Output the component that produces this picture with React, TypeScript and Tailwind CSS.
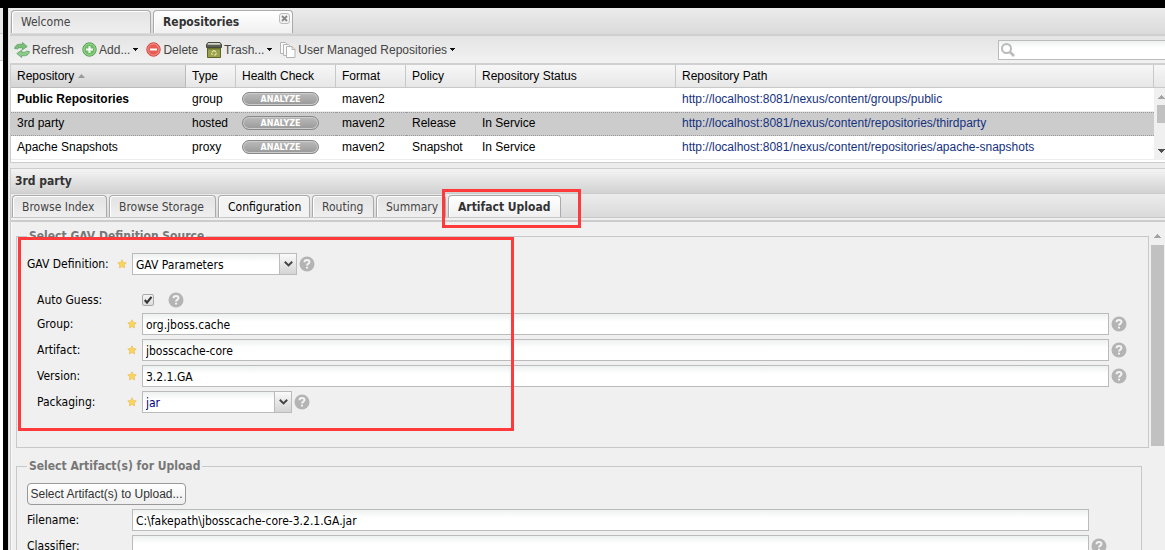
import { ReactNode } from "react"
import { clsx } from "clsx"

interface Repository {
    name: string
    type: string
    format: string
    policy: string
    status: string
    path: string
}

const repositories: Repository[] = [
    {
        name: "Public Repositories",
        type: "group",
        format: "maven2",
        policy: "",
        status: "",
        path: "http://localhost:8081/nexus/content/groups/public",
    },
    {
        name: "3rd party",
        type: "hosted",
        format: "maven2",
        policy: "Release",
        status: "In Service",
        path: "http://localhost:8081/nexus/content/repositories/thirdparty",
    },
    {
        name: "Apache Snapshots",
        type: "proxy",
        format: "maven2",
        policy: "Snapshot",
        status: "In Service",
        path: "http://localhost:8081/nexus/content/repositories/apache-snapshots",
    },
]

const columns = ["Type", "Health Check", "Format", "Policy", "Repository Status", "Repository Path"]

const Caret = () => (
    <svg width="5" height="3" viewBox="0 0 5 3" shapeRendering="crispEdges" className="ml-[1px]">
        <path d="M0 0h5v1H4v1H3v1H2V2H1V1H0z" fill="#111" />
    </svg>
)

const ScrollArrow = ({ down }: { down?: boolean }) => (
    <svg width="7" height="4" viewBox="0 0 7 4" shapeRendering="crispEdges" className="shrink-0">
        {down
            ? <path d="M0 0h7v1H6v1H5v1H4v1H3V3H2V2H1V1H0z" fill="#505050" />
            : <path d="M0 4h7V3H6V2H5V1H4V0H3v1H2v1H1v1H0z" fill="#a3a3a3" />}
    </svg>
)

const RefreshIcon = () => (
    <svg width="16" height="16" viewBox="0 0 16 16">
        <path
            d="M.6 6.600C.8 3.200 4 1.600 8.400 2.400V.5l4.800 4-4.800 3.300V6C6.300 5.500 4.600 5.600 3.800 6.800z"
            fill="#7cbd7a" stroke="#4f9c58" strokeWidth=".7" strokeLinejoin="round"
        />
        <path
            d="M15.400 9.400c-.2 3.400-3.400 5-7.800 4.200v1.900l-4.800-4 4.800-3.300V10c2.100.5 3.800.4 4.600-.8z"
            fill="#8fca8c" stroke="#4f9c58" strokeWidth=".7" strokeLinejoin="round"
        />
    </svg>
)

const AddIcon = () => (
    <svg width="15" height="15" viewBox="0 0 15 15">
        <circle cx="7.500" cy="7.500" r="6.700" fill="#6dbb63" stroke="#4f9e54" />
        <circle cx="7.500" cy="7.500" r="5.600" fill="none" stroke="#a5dc9c" />
        <path d="M6.500 4h2v2.500H11v2H8.500V11h-2V8.500H4v-2h2.500z" fill="#fff" />
    </svg>
)

const DeleteIcon = () => (
    <svg width="15" height="15" viewBox="0 0 15 15">
        <circle cx="7.500" cy="7.500" r="6.700" fill="#e65b52" stroke="#d24744" />
        <circle cx="7.500" cy="7.500" r="5.600" fill="none" stroke="#f39a92" />
        <path d="M4 6.500h7v2H4z" fill="#fff" />
    </svg>
)

const TrashIcon = () => (
    <svg width="16" height="16" viewBox="0 0 16 16">
        <path d="M1.500 5.500h13v10h-13z" fill="#9aa04c" stroke="#5d6426" />
        <path d="M2 6h12v1.500H2z" fill="#6b7230" />
        <path d="M2 .5h12l1.500 2v3H.5v-3z" fill="#596052" stroke="#454a3c" />
        <path d="M2.300 1h11.400l.9 1.800H1.400z" fill="#d3d6ca" />
        <path d="M6 10l2-1.500L10 10M10.500 11l-1 2H8M5.500 11l1 2" fill="none" stroke="#dfe59d" strokeWidth="1.200" />
    </svg>
)

const PagesIcon = () => (
    <svg width="16" height="16" viewBox="0 0 16 16" fill="#fafafa" stroke="#b4b4b4">
        <path d="M.5.5h5l2 2v9h-7z" />
        <path d="M3.500 2.500h5l2 2v9h-7z" />
        <path d="M6.500 4.500H12l3 3v8H6.500z" fill="#fff" />
        <path d="M12 4.500v3h3" fill="none" />
    </svg>
)

const HelpIcon = () => (
    <svg width="16" height="16" viewBox="0 0 16 16" className="shrink-0">
        <circle cx="8" cy="8" r="7.500" fill="#b4b4b4" />
        <path
            d="M5.500 6.300C5.500 4.700 6.600 4 8 4s2.500.8 2.500 2.100C10.500 7.600 8 7.700 8 9.600"
            fill="none" stroke="#f4f4f4" strokeWidth="1.900"
        />
        <path d="M7 10.700h2v1.800H7z" fill="#f4f4f4" />
    </svg>
)

const StarIcon = () => (
    <svg width="10" height="10" viewBox="0 0 10 10" className="shrink-0">
        <path
            d="M5 .8l1.300 2.700 2.900.4-2.100 2 .5 3L5 7.500 2.400 8.900l.5-3-2.100-2 2.900-.4z"
            fill="#fbd65c" stroke="#ecc05a" strokeWidth=".8" strokeLinejoin="round"
        />
    </svg>
)

const ToolbarButton = ({ icon, label, menu }: { icon: ReactNode, label: string, menu?: boolean }) => (
    <button className="flex items-center gap-[2px] text-[#444] whitespace-nowrap">
        {icon}
        {label}
        {menu && <Caret />}
    </button>
)

interface TabProps {
    label: string
    className: string
    active?: boolean
    enabled?: boolean
    closable?: boolean
}

const Tab = ({ label, className, active, enabled, closable }: TabProps) => (
    <button
        role="tab"
        aria-selected={!!active}
        className={clsx(
            "relative flex shrink-0 items-center rounded-t border border-b-0 border-[#aaa] pl-[9px] text-left whitespace-nowrap",
            "shadow-[inset_1px_1px_0_#fff]",
            active
                ? "bg-linear-to-b from-white to-[#f0f0f0] font-bold text-[#333]"
                : enabled
                    ? "bg-[#f3f3f3] text-black"
                    : "bg-linear-to-b from-[#e3e3e3] to-[#efefef] text-[#444]",
            className
        )}
    >
        {label}
        {closable && (
            <svg width="11" height="11" viewBox="0 0 11 11" className="absolute top-[2px] right-[2px]">
                <rect x=".5" y=".5" width="10" height="10" rx="2.500" fill="#f4f4f4" stroke="#bbb" />
                <path d="M3 3l5 5M8 3L3 8" stroke="#888" strokeWidth="1.800" />
            </svg>
        )}
    </button>
)

const FieldLabel = ({ id, label, required }: { id: string, label: string, required?: boolean }) => (
    <label htmlFor={id} className="flex w-[105px] shrink-0 items-center justify-between pr-[5px] whitespace-nowrap">
        {label}
        {required && <StarIcon />}
    </label>
)

interface FieldProps {
    id: string
    label: string
    value: string
    required?: boolean
    help?: boolean
}

const TextField = ({ id, label, value, required, help }: FieldProps) => (
    <div className="flex items-center">
        <FieldLabel id={id} label={label} required={required} />
        <input
            id={id}
            defaultValue={value}
            className="h-[22px] min-w-0 flex-1 border border-[#bbb] bg-linear-to-b from-[#eef1f1] to-white to-40% px-[3px] pt-[1px] text-black outline-none"
        />
        <div className="ml-[2px] w-4">{help && <HelpIcon />}</div>
    </div>
)

const SelectField = ({ id, label, value, className }: FieldProps & { className: string }) => (
    <div className="flex items-center">
        <FieldLabel id={id} label={label} required />
        <div className={clsx("relative", className)}>
            <select
                id={id}
                className="h-[22px] w-full appearance-none border border-[#bbb] bg-linear-to-b from-[#eef1f1] to-white to-40% px-[3px] pt-[1px] outline-none"
            >
                <option>{value}</option>
            </select>
            <span className="pointer-events-none absolute inset-y-0 right-0 flex w-[18px] items-center justify-center border border-[#bbb] bg-linear-to-b from-[#fafafa] to-[#d4d4d4]">
                <svg width="9" height="6" viewBox="0 0 9 6">
                    <path d="M.8.8l3.700 3.600L8.200.8" fill="none" stroke="#444" strokeWidth="2" />
                </svg>
            </span>
        </div>
        <div className="ml-[2px]"><HelpIcon /></div>
    </div>
)

const RepositoryGrid = () => (
    <table className="w-full table-fixed border-separate border-spacing-0 bg-white text-left text-black">
        <colgroup>
            <col className="w-[175px]" />
            <col className="w-[50px]" />
            <col className="w-[100px]" />
            <col className="w-[70px]" />
            <col className="w-[70px]" />
            <col className="w-[200px]" />
            <col />
            <col className="w-[11px]" />
        </colgroup>
        <thead>
            <tr className="h-[23px] bg-linear-to-b from-[#f7f7f7] to-[#e6e6e6]">
                <th className="border-r border-b border-[#bbb] bg-linear-to-b from-[#ececec] to-[#d4d4d4] px-[6px] py-0 font-normal">
                    <span className="flex items-center gap-1">
                        Repository
                        <svg width="7" height="4" viewBox="0 0 7 4"><path d="M0 4L3.500 0 7 4z" fill="#999" /></svg>
                    </span>
                </th>
                {columns.map((column) => (
                    <th key={column} className="border-r border-b border-[#c8c8c8] px-[6px] py-0 font-normal whitespace-nowrap">{column}</th>
                ))}
                <td className="border-b border-[#c8c8c8] p-0" />
            </tr>
        </thead>
        <tbody>
            {repositories.map((repo, i) => {
                const selected = repo.name === "3rd party"
                const cell = clsx(
                    "px-[6px] pt-0 whitespace-nowrap",
                    selected
                        ? "border-y border-dotted border-[#999] bg-[#ccc] pb-[2px]"
                        : "border-b border-[#ededed] pb-[1px]"
                )

                return (
                    <tr key={repo.name} className="h-6">
                        <td className={clsx(cell, i === 0 && "font-bold")}>{repo.name}</td>
                        <td className={cell}>{repo.type}</td>
                        <td className={cell}>
                            <button className="flex h-[14px] w-[77px] items-center justify-center rounded-full border border-[#888] bg-linear-to-b from-[#bbb] to-[#999] pt-[1px] font-['DejaVu_Sans',sans-serif] text-[8px] leading-3 font-bold text-white shadow-[inset_0_0_0_1px_#ccc]">
                                ANALYZE
                            </button>
                        </td>
                        <td className={cell}>{repo.format}</td>
                        <td className={cell}>{repo.policy}</td>
                        <td className={cell}>{repo.status}</td>
                        <td className={cell}>
                            <a href={repo.path} className="text-[#15317e]">{repo.path}</a>
                        </td>
                        {i === 0 && (
                            <td rowSpan={3} className="overflow-hidden bg-[#f0f0f0] p-0 align-top">
                                <div className="flex h-[72px] flex-col items-end justify-between py-[7px]">
                                    <ScrollArrow />
                                    <div className="mt-[6px] mb-auto h-[18px] w-2 bg-[#c1c1c1]" />
                                    <ScrollArrow down />
                                </div>
                            </td>
                        )}
                    </tr>
                )
            })}
        </tbody>
    </table>
)

const UploadForm = () => (
    <div className="flex min-h-0 flex-1 overflow-hidden border-l border-[#fafafa] bg-[#f0f0f0] text-black">
        <form className="min-w-0 flex-1 pt-[6px] pl-1">
            <fieldset className="relative mb-[10px] h-[220px] min-w-0 border border-[#c8c8c8] pl-[10px]">
                <legend className="px-[2px] leading-4 font-bold text-[#777]">Select GAV Definition Source</legend>
                <div className="pt-[9px]">
                    <SelectField id="gav" label="GAV Definition:" value="GAV Parameters" className="w-[165px]" />
                </div>
                <div className="mt-3 flex flex-col pr-[21px] pl-[10px]">
                    <div className="flex h-[26px] items-center">
                        <FieldLabel id="guess" label="Auto Guess:" />
                        <span className="relative flex h-3 w-3">
                            <input
                                id="guess"
                                type="checkbox"
                                defaultChecked
                                className="h-3 w-3 appearance-none rounded-xs border border-[#aaa] bg-linear-to-b from-[#f4f4f4] to-[#ddd]"
                            />
                            <svg width="12" height="12" viewBox="0 0 12 12" className="pointer-events-none absolute inset-0">
                                <path d="M2.800 6l2.200 2.600L9.500 2.800" fill="none" stroke="#333" strokeWidth="2.200" />
                            </svg>
                        </span>
                        <div className="ml-[14px]"><HelpIcon /></div>
                    </div>
                    <div className="flex flex-col gap-1">
                        <TextField id="group" label="Group:" value="org.jboss.cache" required help />
                        <TextField id="artifact" label="Artifact:" value="jbosscache-core" required help />
                        <TextField id="version" label="Version:" value="3.2.1.GA" required help />
                        <SelectField id="packaging" label="Packaging:" value="jar" className="w-[150px] text-[#000080]" />
                    </div>
                </div>
                <div className="pointer-events-none absolute -top-[7px] left-[1px] h-[194px] w-[496px] border-3 border-[#ff3a3a]" />
            </fieldset>

            <fieldset className="mr-[7px] min-w-0 border border-[#c8c8c8] pr-[34px] pb-3 pl-[10px]">
                <legend className="px-[2px] leading-4 font-bold text-[#777]">Select Artifact(s) for Upload</legend>
                <div className="flex flex-col gap-1 pt-[9px]">
                    <button
                        type="button"
                        className="h-[22px] w-[159px] self-start rounded-sm border border-[#999] bg-linear-to-b from-white to-[#eee] font-['Liberation_Sans',Arial,sans-serif] whitespace-nowrap text-[#333]"
                    >
                        Select Artifact(s) to Upload...
                    </button>
                    <TextField id="filename" label="Filename:" value={"C:\\fakepath\\jbosscache-core-3.2.1.GA.jar"} />
                    <TextField id="classifier" label="Classifier:" value="" help />
                </div>
            </fieldset>
        </form>
        <div className="flex w-4 shrink-0 flex-col items-center pt-3">
            <ScrollArrow />
            <div className="mt-[7px] h-[201px] w-[13px] bg-[#c1c1c1]" />
        </div>
    </div>
)

export default function App() {
    return (
        <div className="flex h-screen overflow-hidden bg-black pt-2 font-['Liberation_Sans',Arial,sans-serif] text-xs">
            <div className="mr-[5px] flex w-[3px] shrink-0 flex-col bg-white">
                <div className="h-[26px] border-b border-[#ccc] bg-[#e8e8e8]" />
                <div className="h-[27px] border-b border-[#ccc] bg-[#eee]" />
            </div>

            <main className="flex min-w-0 flex-1 flex-col border-l border-[#ddd] bg-[#ececec] pl-[1px]">
                <div
                    role="tablist"
                    className="flex h-[28px] shrink-0 gap-[2px] border-b-2 border-[#d0d0d0] bg-linear-to-b from-[#ececec] to-[#dadada] pt-[2px] pb-[1px] pl-[1px] font-['DejaVu_Sans_Condensed','Noto_Sans',sans-serif]"
                >
                    <Tab label="Welcome" className="w-[140px]" />
                    <Tab label="Repositories" className="w-[140px]" active closable />
                </div>

                <div className="flex h-[29px] shrink-0 items-center justify-between border-b-2 border-[#d0d0d0] bg-linear-to-b from-[#e4e4e4] to-[#f2f2f2] pl-1">
                    <div className="flex items-center gap-2">
                        <ToolbarButton icon={<RefreshIcon />} label="Refresh" />
                        <ToolbarButton icon={<AddIcon />} label="Add..." menu />
                        <ToolbarButton icon={<DeleteIcon />} label="Delete" />
                        <ToolbarButton icon={<TrashIcon />} label="Trash..." menu />
                        <ToolbarButton icon={<PagesIcon />} label="User Managed Repositories" menu />
                    </div>
                    <div className="flex h-5 w-[167px] items-center border border-r-0 border-[#bbb] bg-linear-to-b from-[#eef1f1] to-white to-40% pl-[2px]">
                        <svg width="14" height="14" viewBox="0 0 14 14" fill="none" stroke="#bbb" strokeWidth="2" className="shrink-0">
                            <circle cx="5.500" cy="5.500" r="4.500" />
                            <path d="M9 9l4 4" strokeWidth="2.600" />
                        </svg>
                        <input aria-label="Search" className="min-w-0 flex-1 px-1 outline-none" />
                    </div>
                </div>

                <div className="h-[98px] shrink-0 border-b border-l border-[#ccc] bg-white">
                    <RepositoryGrid />
                </div>

                <section className="mt-[5px] flex min-h-0 flex-1 flex-col border-t border-l border-[#ccc] font-['DejaVu_Sans_Condensed','Noto_Sans',sans-serif]">
                    <h2 className="flex h-[25px] shrink-0 items-center border-b border-[#ccc] bg-linear-to-b from-[#f4f4f4] to-[#d2d2d2] pl-1 font-bold text-[#333]">
                        3rd party
                    </h2>
                    <div
                        role="tablist"
                        className="relative flex h-6 shrink-0 gap-[2px] border-b border-[#c8c8c8] bg-linear-to-b from-[#ececec] to-[#dadada] pt-[1px] pl-[1px]"
                    >
                        <Tab label="Browse Index" className="w-[95px]" />
                        <Tab label="Browse Storage" className="w-[107px]" />
                        <Tab label="Configuration" className="w-[92px]" enabled />
                        <Tab label="Routing" className="w-[62px]" />
                        <Tab label="Summary" className="w-[70px]" />
                        <Tab label="Artifact Upload" className="w-[113px]" active />
                        <div className="pointer-events-none absolute -top-[5px] left-[431px] z-10 h-[39px] w-[139px] border-3 border-[#ff3a3a]" />
                    </div>
                    <div className="h-1 shrink-0 border-b-2 border-[#ccc] bg-[#f0f0f0]" />
                    <UploadForm />
                </section>
            </main>
        </div>
    )
}
